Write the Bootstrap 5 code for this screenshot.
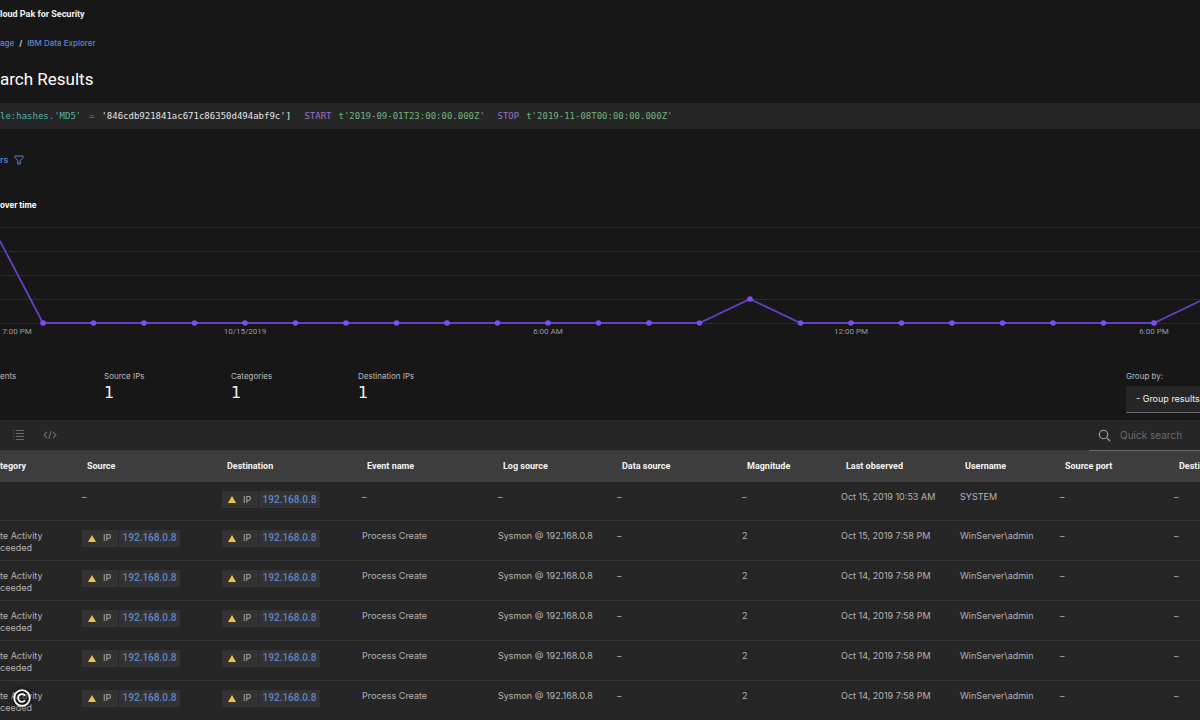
<!DOCTYPE html>
<html lang="en" data-bs-theme="dark">
<head>
<meta charset="utf-8">
<meta name="viewport" content="width=device-width, initial-scale=1">
<title>Search Results - Cloud Pak for Security</title>
<link href="https://cdn.jsdelivr.net/npm/bootstrap@5.3.0/dist/css/bootstrap.min.css" rel="stylesheet">
<style>
  body { background: #171717; color: #f0f0f0; font: 9px/12px Inter, Roboto, "Liberation Sans", sans-serif; }
  a { color: #5f86cc; text-decoration: none; }
  .page-shell { height: 100vh; overflow: hidden; }
  .topbar { height: 27px; }
  .brand-name { font-family: Roboto, sans-serif; font-size: 9px; font-weight: 700; color: #f0f0f0; }
  .crumbs { height: 32px; font-size: 8px; font-weight: 500; gap: 5px; }
  .page-title { height: 44px; padding-top: 8px; font: 17px/24px Roboto, sans-serif; }
  .query { height: 26px; background: #262626; font: 9px/12px "DejaVu Sans Mono", "Liberation Mono", monospace; gap: 7px; }
  .q-field { color: #4fb3b0; width: 82px; }
  .q-op { color: #b8577f; }
  .q-value { color: #e4e4e4; width: 196px; }
  .q-key { color: #9575cd; }
  .q-time { color: #6fb47c; width: 152px; }
  .filters { height: 62px; }
  .filters a { gap: 5px; font-weight: 500; }
  .chart-title { height: 30px; font-size: 8px; font-weight: 700; }
  .chart { display: block; width: 100%; height: auto; }
  .chart text { font-family: Roboto, sans-serif; font-size: 8px; fill: #9a9a9a; text-anchor: middle; }
  .summary { height: 79px; padding-top: 29px; }
  .stat-cell { width: 127px; }
  .stat-cell:first-child { width: 104px; }
  .stat-cell dt, .group-box label { font-size: 8px; line-height: 12px; font-weight: 400; color: #bcbcbc; }
  .stat-cell dd { font: 16px/22px "DejaVu Sans", sans-serif; color: #f0f0f0; }
  .group-box { width: 74px; }
  .group-box select { height: 27px; margin-top: 4px; padding: 0 0 0 10px; font-size: 9px; color: #f0f0f0; background: #262626; border: 0; border-bottom: 1px solid #6a6a6a; border-radius: 0; appearance: none; }
  .toolbar { height: 31px; background: #262626; border-bottom: 1px solid #333; }
  .tool-set { gap: 17px; }
  .tool { border: 0; padding: 0; background: none; color: #6b6b6b; line-height: 0; }
  .search-box { width: 111px; gap: 9px; padding-left: 9px; height: 31px; border-bottom: 1px solid #6a6a6a; }
  .search-box input { min-width: 0; flex: 1; padding: 0; border: 0; background: none; color: #f0f0f0; font-size: 10px; }
  .search-box input::placeholder { color: #6b6b6b; opacity: 1; }
  .results { table-layout: fixed; width: 100%; background: #262626; }
  .results th { height: 31px; padding: 0 0 1px 5px; background: #3d3d3d; color: #f4f4f4; font: 700 9px/12px Roboto, sans-serif; vertical-align: middle; white-space: nowrap; }
  .results td { height: 38px; padding: 9px 0 6px; border-bottom: 1px solid #363636; color: #b4b4b4; vertical-align: top; white-space: nowrap; }
  .results th:first-child { padding-left: 0; }
  .w-cat { width: 82px; } .w-ip { width: 140px; } .w-event { width: 136px; } .w-log { width: 119px; }
  .w-data { width: 125px; } .w-mag { width: 99px; } .w-user { width: 100px; } .w-port { width: 114px; } .w-rest { width: 26px; }
  .chip { height: 17px; gap: 1px; }
  .chip > * { background: #333; height: 17px; }
  .chip-kind { width: 36px; padding-left: 6px; gap: 7px; }
  .chip-addr { width: 61px; font: 500 10px/12px Roboto, sans-serif; }
  .copy-mark { position: absolute; left: 10px; bottom: 10px; filter: drop-shadow(0 0 3px #000); }
</style>
</head>
<body>
<div class="page-shell position-relative">
  <header class="topbar d-flex align-items-center"><span class="brand-name">loud Pak for Security</span></header>
  <nav class="crumbs d-flex align-items-center" aria-label="breadcrumb"><a href="#">age</a><span>/</span><a href="#">IBM Data Explorer</a></nav>
  <h1 class="page-title m-0">arch Results</h1>

  <div class="query d-flex align-items-center">
    <span class="q-field">le:hashes.'MD5'</span><span class="q-op">=</span><span class="q-value">'846cdb921841ac671c86350d494abf9c']</span>
    <span class="q-key">START</span><span class="q-time">t'2019-09-01T23:00:00.000Z'</span>
    <span class="q-key">STOP</span><span class="q-time">t'2019-11-08T00:00:00.000Z'</span>
  </div>

  <div class="filters d-flex align-items-center">
    <a href="#" class="d-flex align-items-center">rs
      <svg width="12" height="12" viewBox="0 0 12 12" fill="none" stroke="currentColor"><path d="M2 2h8v1.6L7.2 6.7V10H4.8V6.7L2 3.6z"/></svg></a>
  </div>

  <section>
    <h2 class="chart-title d-flex align-items-center m-0">over time</h2>
    <svg class="chart" viewBox="0 0 1200 120" role="img" aria-label="Events over time">
      <path d="M0 6.5H1200M0 30.5H1200M0 54.5H1200M0 78.5H1200M0 102.5H1200" stroke="#2c2c2c"/>
      <path id="trend" d="M0 20L43 102H699.5L750 78L800.5 102H1154L1200 80" fill="none" stroke="#6540c0" stroke-width="1.8"/>
      <g id="dots" fill="#7c4df0"></g>
      <text x="17" y="113">7:00 PM</text><text x="245" y="113">10/15/2019</text><text x="548" y="113">6:00 AM</text><text x="851" y="113">12:00 PM</text><text x="1154" y="113">6:00 PM</text>
    </svg>
  </section>

  <section class="summary d-flex justify-content-between">
    <dl class="d-flex m-0">
      <div class="stat-cell"><dt>ents</dt></div>
      <div class="stat-cell"><dt>Source IPs</dt><dd class="m-0">1</dd></div>
      <div class="stat-cell"><dt>Categories</dt><dd class="m-0">1</dd></div>
      <div class="stat-cell"><dt>Destination IPs</dt><dd class="m-0">1</dd></div>
    </dl>
    <div class="group-box">
      <label class="d-block" for="group">Group by:</label>
      <select id="group" class="w-100"><option>- Group results</option></select>
    </div>
  </section>

  <div class="toolbar d-flex justify-content-between">
    <div class="tool-set d-flex align-items-center ps-2 ms-1">
      <button class="tool" type="button" aria-label="List view"><svg width="14" height="12" viewBox="0 0 14 12" stroke="currentColor"><path d="M4 1.5h8M4 4.5h8M4 7.5h8M4 10.5h8M1.500 1.500h1M1.500 4.500h1M1.500 7.500h1M1.500 10.500h1"/></svg></button>
      <button class="tool" type="button" aria-label="Code view"><svg width="14" height="12" viewBox="0 0 14 12" fill="none" stroke="currentColor" stroke-width="1.1"><path d="M4 3L1 6l3 3M10 3l3 3-3 3M8.200 2L5.800 10"/></svg></button>
    </div>
    <div class="search-box d-flex align-items-center">
      <svg width="13" height="13" viewBox="0 0 13 13" fill="none" stroke="#a8a8a8" stroke-width="1.1"><circle cx="5.500" cy="5.500" r="4.200"/><path d="M8.600 8.600L12 12"/></svg>
      <input type="search" placeholder="Quick search" aria-label="Quick search">
    </div>
  </div>

  <table class="results">
    <colgroup><col class="w-cat"><col class="w-ip"><col class="w-ip"><col class="w-event"><col class="w-log"><col class="w-data"><col class="w-mag"><col class="w-log"><col class="w-user"><col class="w-port"><col class="w-rest"></colgroup>
    <thead><tr><th>tegory</th><th>Source</th><th>Destination</th><th>Event name</th><th>Log source</th><th>Data source</th><th>Magnitude</th><th>Last observed</th><th>Username</th><th>Source port</th><th>Desti</th></tr></thead>
    <tbody id="rows"></tbody>
  </table>

  <svg class="copy-mark" width="24" height="24" viewBox="0 0 24 24" fill="none" stroke="#fff" stroke-width="1.800" role="img" aria-label="Copyright"><circle cx="12" cy="12" r="7.800"/><path d="M15 9.800A3.800 3.800 0 1 0 15 14.200"/></svg>
</div>
<script src="https://cdn.jsdelivr.net/npm/bootstrap@5.3.0/dist/js/bootstrap.bundle.min.js"></script>
<script>
  const chip = '<div class="chip d-flex"><span class="chip-kind d-flex align-items-center"><svg width="8" height="7" viewBox="0 0 8 7"><path d="M4 0L8 7H0z" fill="#f1c344"/></svg><span>IP</span></span><a href="#" class="chip-addr d-flex align-items-center justify-content-center">192.168.0.8</a></div>';
  const event = day => ['te Activity<br>ceeded', chip, chip, 'Process Create', 'Sysmon @ 192.168.0.8', '–', '2', `Oct ${day}, 2019 7:58 PM`, 'WinServer\\admin', '–', '–'];
  const data = [
    ['', '–', chip, '–', '–', '–', '–', 'Oct 15, 2019 10:53 AM', 'SYSTEM', '–', '–'],
    event(15), event(14), event(14), event(14), event(14)
  ];
  document.getElementById('rows').innerHTML = data.map(r => '<tr>' + r.map(c => `<td>${c}</td>`).join('') + '</tr>').join('');
  document.getElementById('dots').innerHTML = Array.from({ length: 23 }, (_, i) =>
    `<circle cx="${43 + i * 50.5}" cy="${i === 14 ? 78 : 102}" r="2.8"/>`).join('');
</script>
</body>
</html>
